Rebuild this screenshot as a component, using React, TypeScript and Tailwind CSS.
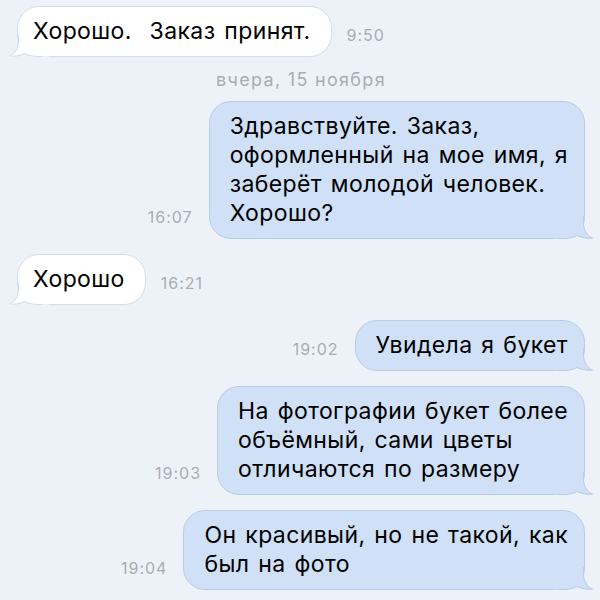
import React from "react";

type Msg =
  | { kind: "in" | "out"; lines: string[]; time: string }
  | { kind: "date"; text: string };

const messages: Msg[] = [
  { kind: "in", lines: ["Хорошо.\u00a0 Заказ принят."], time: "9:50" },
  { kind: "date", text: "вчера, 15 ноября" },
  {
    kind: "out",
    lines: ["Здравствуйте. Заказ,", "оформленный на мое имя, я", "заберёт молодой человек.", "Хорошо?"],
    time: "16:07",
  },
  { kind: "in", lines: ["Хорошо"], time: "16:21" },
  { kind: "out", lines: ["Увидела я букет"], time: "19:02" },
  {
    kind: "out",
    lines: ["На фотографии букет более", "объёмный, сами цветы", "отличаются по размеру"],
    time: "19:03",
  },
  { kind: "out", lines: ["Он красивый, но не такой, как", "был на фото"], time: "19:04" },
];

const Tail = ({ out }: { out: boolean }) => {
  const fill = out ? "#cfe0f7" : "#ffffff";
  const stroke = out ? "#b9cce6" : "#d6dde6";
  return (
    <svg
      width="40"
      height="30"
      viewBox="0 0 40 30"
      className={out ? "absolute -right-[9px] -bottom-px -scale-x-100" : "absolute -left-[9px] -bottom-px"}
    >
      <path
        d="M9.5 8 L9.5 14 C9.5 22 5 27.5 0.5 29 C6 29.8 12 28.5 16 26.5 C20 28.8 25 29.5 31 29.5 L40 29.5 L40 8 Z"
        fill={fill}
      />
      <path
        d="M9.5 7 L9.5 14 C9.5 22 5 27.5 0.5 29 C6 29.8 12 28.5 16 26.5 C20 28.8 25 29.5 31 29.5 L34 29.5"
        fill="none"
        stroke={stroke}
        strokeWidth="1"
      />
    </svg>
  );
};

const Time = ({ t }: { t: string }) => (
  <span className="pb-[13px] text-[16px] leading-[18px] tracking-[1px] text-[#a7adb6]">{t}</span>
);

const Bubble = ({ lines, out }: { lines: string[]; out: boolean }) => (
  <div
    className={
      out
        ? "relative rounded-[22px] border border-[#b9cce6] bg-[#cfe0f7] py-[10px] pl-[20px] pr-[16px]"
        : "relative rounded-[22px] border border-[#d6dde6] bg-white py-[10px] pl-[15px] pr-[20px]"
    }
  >
    <Tail out={out} />
    <div className="relative text-[23px] leading-[29px] tracking-[0.4px] text-black [word-spacing:2px]">
      {lines.map((l, i) => (
        <div key={i} className="whitespace-nowrap">
          {l}
        </div>
      ))}
    </div>
  </div>
);

export default function App() {
  return (
    <div
      className="flex h-[600px] w-[600px] flex-col gap-[15px] overflow-hidden bg-[#edf2f9] pt-[6px] pl-[17px] pr-[15px]"
      style={{ fontFamily: "Inter, 'Noto Sans', sans-serif" }}
    >
      {messages.map((m, i) => {
        if (m.kind === "date") {
          return (
            <div
              key={i}
              className="flex h-[14px] items-center justify-center text-[18px] tracking-[1.3px] text-[#a7adb6]"
            >
              {m.text}
            </div>
          );
        }
        if (m.kind === "in") {
          return (
            <div key={i} className="flex items-end gap-[15px]">
              <Bubble lines={m.lines} out={false} />
              <Time t={m.time} />
            </div>
          );
        }
        return (
          <div key={i} className="flex items-end justify-end gap-[16px]">
            <Time t={m.time} />
            <Bubble lines={m.lines} out={true} />
          </div>
        );
      })}
    </div>
  );
}
